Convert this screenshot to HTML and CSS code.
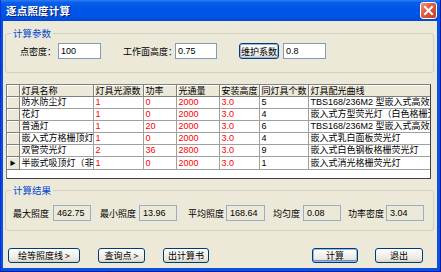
FILE: index.html
```html
<!DOCTYPE html>
<html lang="zh-CN">
<head>
    <meta charset="UTF-8">
    <title>逐点照度计算</title>
    <link rel="stylesheet" href="styles.css">
</head>
<body>
    <div class="window">
        <div class="titlebar">
            <span class="title">逐点照度计算</span>
            <span class="close-btn">
                <svg width="11" height="11" viewBox="0 0 11 11"><path d="M2 2 L9 9 M9 2 L2 9" stroke="#fff" stroke-width="2" stroke-linecap="square"/></svg>
            </span>
        </div>

        <div class="client">
            <div class="group params">
                <span class="group-title">计算参数</span>
                <div class="row">
                    <label class="lbl lbl-density">点密度：</label>
                    <div class="input w43">100</div>
                    <label class="lbl lbl-height">工作面高度：</label>
                    <div class="input w42">0.75</div>
                    <button class="btn btn-maint">维护系数</button>
                    <div class="input w43 after-btn">0.8</div>
                </div>
            </div>

            <div class="grid">
                <table>
                    <colgroup>
                        <col class="c-rh"><col class="c-name"><col class="c-src"><col class="c-pow">
                        <col class="c-flux"><col class="c-h"><col class="c-cnt"><col class="c-curve">
                    </colgroup>
                    <thead>
                        <tr>
                            <th class="rh"></th>
                            <th>灯具名称</th>
                            <th>灯具光源数</th>
                            <th>功率</th>
                            <th>光通量</th>
                            <th>安装高度</th>
                            <th>同灯具个数</th>
                            <th>灯具配光曲线</th>
                        </tr>
                    </thead>
                    <tbody>
                        <tr>
                            <td class="rh"></td><td>防水防尘灯</td><td class="red">1</td><td class="red">0</td><td class="red">2000</td><td class="red">3.0</td><td>5</td><td>TBS168/236M2 型嵌入式高效格栅灯</td>
                        </tr>
                        <tr>
                            <td class="rh"></td><td>花灯</td><td class="red">1</td><td class="red">0</td><td class="red">2000</td><td class="red">3.0</td><td>4</td><td>嵌入式方型荧光灯（白色格栅无</td>
                        </tr>
                        <tr>
                            <td class="rh"></td><td>普通灯</td><td class="red">1</td><td class="red">20</td><td class="red">2000</td><td class="red">3.0</td><td>6</td><td>TBS168/236M2 型嵌入式高效格栅灯</td>
                        </tr>
                        <tr>
                            <td class="rh"></td><td>嵌入式方格栅顶灯</td><td class="red">1</td><td class="red">0</td><td class="red">2000</td><td class="red">3.0</td><td>4</td><td>嵌入式乳白面板荧光灯</td>
                        </tr>
                        <tr>
                            <td class="rh"></td><td>双管荧光灯</td><td class="red">2</td><td class="red">36</td><td class="red">2800</td><td class="red">3.0</td><td>9</td><td>嵌入式白色钢板格栅荧光灯</td>
                        </tr>
                        <tr>
                            <td class="rh"><span class="marker">▶</span></td><td>半嵌式吸顶灯（非标</td><td class="red">1</td><td class="red">0</td><td class="red">2000</td><td class="red">3.0</td><td>1</td><td>嵌入式消光格栅荧光灯</td>
                        </tr>
                    </tbody>
                </table>
            </div>

            <div class="group results">
                <span class="group-title">计算结果</span>
                <div class="row">
                    <label class="lbl r-max">最大照度</label>
                    <div class="input ro w38">462.75</div>
                    <label class="lbl r-min">最小照度</label>
                    <div class="input ro w38">13.96</div>
                    <label class="lbl r-avg">平均照度</label>
                    <div class="input ro w39">168.64</div>
                    <label class="lbl r-uni">均匀度</label>
                    <div class="input ro w38">0.08</div>
                    <label class="lbl r-pow">功率密度</label>
                    <div class="input ro w38">3.04</div>
                </div>
            </div>

            <div class="actions">
                <button class="btn b-iso">绘等照度线 &gt;</button>
                <button class="btn b-query">查询点 &gt;</button>
                <button class="btn b-book">出计算书</button>
                <button class="btn b-calc default">计算</button>
                <button class="btn b-exit">退出</button>
            </div>
        </div>
    </div>
</body>
</html>
```

FILE: styles.css
```css
body, html {
    margin: 0;
    padding: 0;
    width: 441px;
    height: 272px;
    overflow: hidden;
    font-family: "Noto Sans CJK SC", "Liberation Sans", sans-serif;
    font-size: 9px;
}

.window {
    width: 441px;
    height: 272px;
    box-sizing: border-box;
    display: flex;
    flex-direction: column;
    background: #0A4FE0;
    border-left: 1px solid #0831D9;
    border-right: 1px solid #001EA0;
    border-bottom: 1px solid #001EA0;
}

.titlebar {
    height: 21px;
    display: flex;
    align-items: center;
    justify-content: space-between;
    padding: 0 3px 0 5px;
    background: linear-gradient(#2C7CF6 0%, #0A5EEA 12%, #0055E5 40%, #0053E8 80%, #0046D0 100%);
}

.title {
    color: #fff;
    font-weight: bold;
    font-size: 10.5px;
    letter-spacing: 0.2px;
    text-shadow: 1px 1px 0 #0A1E6E;
}

.close-btn {
    width: 15px;
    height: 15px;
    border: 1px solid #fff;
    border-radius: 3px;
    background: linear-gradient(135deg, #F09A7A 0%, #E2573A 45%, #C8401E 100%);
    display: flex;
    align-items: center;
    justify-content: center;
}

.client {
    flex: 1;
    margin: 0 3px 3px 2px;
    background: #ECE9D8;
    display: flex;
    flex-direction: column;
}

.group {
    position: relative;
    border: 1px solid #D0D0BF;
    border-radius: 3px;
    margin: 0 3px 0 2px;
}

.group-title {
    position: absolute;
    top: -7px;
    left: 5px;
    padding: 0 2px;
    background: #ECE9D8;
    color: #0046D5;
    font-size: 9.5px;
    line-height: 12px;
}

.params {
    margin-top: 12px;
    padding: 9px 0 13px 14px;
}

.row {
    display: flex;
    align-items: center;
    height: 16px;
}

.lbl {
    color: #000;
    white-space: nowrap;
}

.lbl-density { width: 38px; }
.lbl-height { width: 52px; margin-left: 22px; }

.input {
    box-sizing: border-box;
    height: 16px;
    border: 1px solid #7F9DB9;
    background: #fff;
    padding-left: 2px;
    font-family: "Liberation Sans", sans-serif;
    font-size: 9px;
    line-height: 14px;
    color: #000;
}

.input.ro {
    background: #ECE9D8;
    border-color: #9AAFC4;
    padding-left: 3px;
}

.w38 { width: 38px; }
.w39 { width: 39px; }
.w42 { width: 42px; }
.w43 { width: 43px; }

.after-btn { margin-left: 4px; }

.btn {
    box-sizing: border-box;
    height: 15px;
    padding: 0;
    border: 1px solid #003C74;
    border-radius: 3px;
    background: linear-gradient(#FFFFFF 0%, #F4F3EE 40%, #E9E7DE 80%, #D6D0C5 100%);
    font-family: "Noto Sans CJK SC", sans-serif;
    font-size: 9px;
    line-height: 13px;
    color: #000;
}

.btn-maint {
    width: 40px;
    margin-left: 22px;
    height: 16px;
    box-shadow: inset 0 0 0 1px #98B8EA;
}

.grid {
    margin: 11px 6px 0 3px;
    height: 95px;
    box-sizing: border-box;
    background: #fff;
    border-top: 1px solid #808080;
    border-left: 1px solid #808080;
    border-right: 1px solid #404040;
    border-bottom: 1px solid #404040;
    overflow: hidden;
}

.grid table {
    border-collapse: collapse;
    table-layout: fixed;
    width: 424px;
}

.c-rh { width: 12px; }
.c-name { width: 74px; }
.c-src { width: 50px; }
.c-pow { width: 33px; }
.c-flux { width: 43px; }
.c-h { width: 40px; }
.c-cnt { width: 49px; }
.c-curve { width: 123px; }

.grid th,
.grid td {
    height: 11px;
    padding: 0 0 0 2px;
    line-height: 11px;
    white-space: nowrap;
    overflow: hidden;
    text-align: left;
    font-weight: normal;
    font-size: 9px;
    border-right: 1px solid #A0A0A0;
    border-bottom: 1px solid #A0A0A0;
}

.grid th {
    background: #ECE9D8;
    color: #000;
    border-right: 1px solid #808080;
    border-bottom: 1px solid #808080;
    box-shadow: inset 1px 1px 0 #fff;
}

.grid td {
    color: #000;
    font-family: "Liberation Sans", "Noto Sans CJK SC", sans-serif;
}

.grid td.red {
    color: #FF0000;
}

.grid td.rh {
    background: #ECE9D8;
    border-right: 1px solid #808080;
    border-bottom: 1px solid #808080;
    box-shadow: inset 1px 1px 0 #fff;
    padding: 0;
    text-align: center;
}

.marker {
    font-size: 6px;
    line-height: 11px;
    color: #000;
}

.results {
    margin-top: 11px;
    padding: 14px 0 9px 7px;
}

.r-max { width: 40px; }
.r-min { width: 39px; margin-left: 9px; }
.r-avg { width: 38px; margin-left: 11px; }
.r-uni { width: 30px; margin-left: 8px; }
.r-pow { width: 38px; margin-left: 7px; }

.actions {
    display: flex;
    margin-top: 17px;
    padding: 0 14px 0 5px;
}

.b-iso { width: 72px; }
.b-query { width: 47px; margin-left: 18px; }
.b-book { width: 46px; margin-left: 18px; }
.b-calc { width: 46px; margin-left: auto; }
.b-exit { width: 48px; margin-left: 17px; }

.btn.default {
    box-shadow: inset 0 0 0 1px #98B8EA, inset 0 -1px 0 1px #6C8FD8;
}
```
